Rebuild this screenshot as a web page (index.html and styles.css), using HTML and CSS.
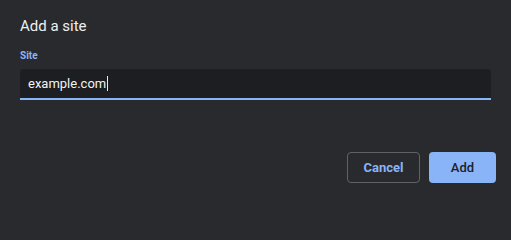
FILE: index.html
```html
<!DOCTYPE html>
<html>
<head>
<meta charset="utf-8">
<link rel="stylesheet" href="styles.css">
</head>
<body>
<div class="dialog">
  <h1 class="title">Add a site</h1>
  <label class="field-label">Site</label>
  <div class="input">
    <span class="input-text">example.com</span><span class="caret"></span>
  </div>
  <div class="actions">
    <button class="btn btn-cancel">Cancel</button>
    <button class="btn btn-add">Add</button>
  </div>
</div>
</body>
</html>
```
FILE: styles.css
```css
html, body {
  margin: 0;
  padding: 0;
  background: #292a2d;
}
body {
  width: 511px;
  height: 201px;
  overflow: hidden;
  font-family: Roboto, "Liberation Sans", sans-serif;
}
.dialog {
  box-sizing: border-box;
  width: 511px;
  height: 201px;
  padding: 16px 15px 0 20px;
  background: #292a2d;
  display: flex;
  flex-direction: column;
}
.title {
  margin: 0;
  font-size: 15px;
  font-weight: 400;
  line-height: 20px;
  color: #eeeff1;
}
.field-label {
  margin-top: 14px;
  font-size: 10px;
  font-weight: 700;
  line-height: 12px;
  color: #8ab4f8;
}
.input {
  margin-top: 7px;
  height: 31px;
  width: 471px;
  box-sizing: border-box;
  background: #1d1e21;
  border-radius: 4px 4px 0 0;
  border-bottom: 2px solid #8ab4f8;
  padding: 0 8px;
  display: flex;
  align-items: center;
  font-size: 13px;
  color: #f1f3f4;
}
.caret {
  display: inline-block;
  width: 1px;
  height: 15px;
  background: #e8eaed;
  margin-left: 1px;
}
.actions {
  margin-top: 52px;
  display: flex;
  justify-content: flex-end;
  gap: 9px;
}
.btn {
  height: 31px;
  border-radius: 4px;
  font-family: Roboto, "Liberation Sans", sans-serif;
  font-size: 13px;
  padding: 0;
  cursor: pointer;
}
.btn-cancel {
  width: 73px;
  background: transparent;
  border: 1px solid #5f6368;
  color: #8ab4f8;
  font-weight: 700;
}
.btn-add {
  width: 67px;
  background: #8ab4f8;
  border: none;
  color: #202124;
  font-weight: 500;
}
```
